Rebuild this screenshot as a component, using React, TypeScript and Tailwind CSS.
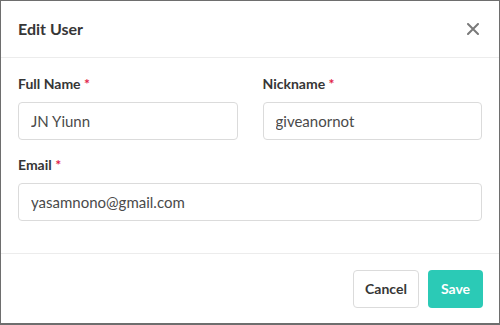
import React from "react";

function Field({ label, value, className = "" }: { label: string; value: string; className?: string }) {
  return (
    <div className={"flex flex-col " + className}>
      <label className="text-[14px] font-bold text-[#363636] leading-[20px] mb-[8px]">
        {label} <span className="text-[#e11d48]">*</span>
      </label>
      <input
        readOnly
        value={value}
        className="h-[38px] w-full rounded-[4px] border border-[#dbdbdb] px-[12px] text-[15px] text-[#4a4a4a] outline-none bg-white"
        style={{ fontFamily: "Lato, 'Liberation Sans', sans-serif" }}
      />
    </div>
  );
}

export default function App() {
  return (
    <div
      className="w-[500px] h-[325px] bg-[#6e6e6e] pt-px pl-px pr-px pb-[2px]"
      style={{ fontFamily: "Lato, 'Liberation Sans', sans-serif" }}
    >
      <div className="w-full h-full bg-white flex flex-col">
        <div className="h-[57px] flex items-center justify-between pl-[17px] pr-[20px] border-b border-[#ececec]">
          <h2 className="text-[16px] font-bold text-[#363636]">Edit User</h2>
          <svg width="12" height="12" viewBox="0 0 12 12" className="text-[#7a7a7a]">
            <path d="M1 1 L11 11 M11 1 L1 11" stroke="currentColor" strokeWidth="2" strokeLinecap="round" />
          </svg>
        </div>
        <div className="flex-1 px-[17px] pt-[16px] flex flex-col gap-[15px] border-b border-[#ececec]">
          <div className="grid grid-cols-2 gap-[25px]">
            <Field label="Full Name" value="JN Yiunn" />
            <Field label="Nickname" value="giveanornot" />
          </div>
          <Field label="Email" value="yasamnono@gmail.com" />
        </div>
        <div className="h-[69px] flex items-center justify-end gap-[9px] pr-[16px]">
          <button className="h-[38px] w-[66px] rounded-[4px] border border-[#dbdbdb] bg-white text-[14px] font-bold text-[#363636]">
            Cancel
          </button>
          <button className="h-[38px] w-[55px] rounded-[4px] bg-[#2bcab6] text-[14px] font-bold text-white">
            Save
          </button>
        </div>
      </div>
    </div>
  );
}
